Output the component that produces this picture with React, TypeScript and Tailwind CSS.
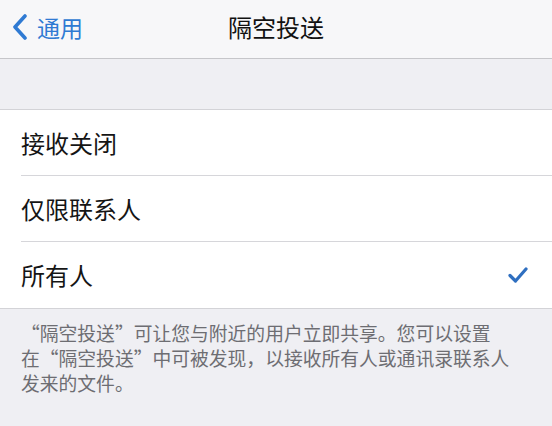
import React from "react";

const font = { fontFamily: '"Noto Sans CJK SC", "Noto Sans", sans-serif' };

function Row({ label, checked, last }: { label: string; checked?: boolean; last?: boolean }) {
  return (
    <div className="pl-[21px] bg-white">
      <div className={`h-[66px] flex items-center justify-between pr-[24px] ${last ? "" : "border-b border-[#d6d6da]"}`}>
        <span className="text-[24px] text-[#151515] leading-none">{label}</span>
        {checked && (
          <svg width="20" height="16" viewBox="0 0 20 16" fill="none">
            <path d="M2 8.5 L7.5 14 L18 2" stroke="#2f6fc0" strokeWidth="3.2" strokeLinecap="round" strokeLinejoin="round" />
          </svg>
        )}
      </div>
    </div>
  );
}

export default function App() {
  return (
    <div className="w-[552px] h-[426px] bg-[#efeff3] overflow-hidden" style={font}>
      <div className="h-[59px] bg-[#f7f7f9] border-b border-[#c6c6ca] relative flex items-center">
        <div className="flex items-center pl-[12px] pb-[4px]">
          <svg width="16" height="26" viewBox="0 0 16 26" fill="none">
            <path d="M13 2 L3 13 L13 24" stroke="#2f7ad3" strokeWidth="3.6" strokeLinecap="round" strokeLinejoin="round" />
          </svg>
          <span className="ml-[9px] text-[23px] text-[#2f7ad3] leading-none">通用</span>
        </div>
        <div className="absolute inset-0 flex items-center justify-center pb-[4px]">
          <span className="text-[24px] font-normal text-[#111] leading-none">隔空投送</span>
        </div>
      </div>
      <div className="h-[51px] border-b border-[#d3d3d7]" />
      <div className="border-b border-[#d3d3d7]">
        <Row label="接收关闭" />
        <Row label="仅限联系人" />
        <Row label="所有人" checked last />
      </div>
      <div className="pl-[21px] pt-[11px] text-[18.8px] leading-[25px] text-[#6d6d72]">
        <div className="whitespace-nowrap">“隔空投送”可让您与附近的用户立即共享。您可以设置</div>
        <div className="whitespace-nowrap">在“隔空投送”中可被发现，以接收所有人或通讯录联系人</div>
        <div className="whitespace-nowrap">发来的文件。</div>
      </div>
    </div>
  );
}
